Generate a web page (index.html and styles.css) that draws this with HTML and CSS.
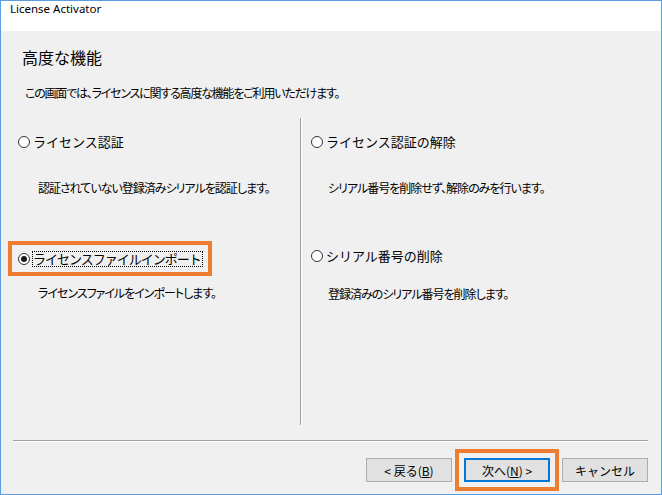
FILE: index.html
```html
<!DOCTYPE html>
<html>
	<head>
		<meta charset="UTF-8">
		<title>License Activator</title>
		<link rel="stylesheet" href="styles.css">
	</head>
	<body>
		<div class="window">
			<div class="titlebar">License Activator</div>
			<div class="client">
				<h1 class="head">高度な機能</h1>
				<p class="lead">この画面では、ライセンスに関する高度な機能をご利用いただけます。</p>

				<div class="options">
					<div class="col col_left">
						<div class="opt first"><span class="radio"></span><span class="label">ライセンス認証</span></div>
						<p class="desc first_desc">認証されていない登録済みシリアルを認証します。</p>
						<div class="mark">
							<div class="opt"><span class="radio checked"></span><span class="label focus">ライセンスファイルインポート</span></div>
						</div>
						<p class="desc last_desc">ライセンスファイルをインポートします。</p>
					</div>
					<div class="divider"></div>
					<div class="col col_right">
						<div class="opt first"><span class="radio"></span><span class="label">ライセンス認証の解除</span></div>
						<p class="desc first_desc">シリアル番号を削除せず、解除のみを行います。</p>
						<div class="opt second"><span class="radio"></span><span class="label">シリアル番号の削除</span></div>
						<p class="desc last_desc">登録済みのシリアル番号を削除します。</p>
					</div>
				</div>

				<div class="sep"></div>

				<div class="buttons">
					<button class="btn">&lt; 戻る(<u>B</u>)</button>
					<button class="btn btn_default">次へ(<u>N</u>) &gt;</button>
					<button class="btn">キャンセル</button>
				</div>
			</div>
		</div>
	</body>
</html>
```

FILE: styles.css
```css
body{margin: 0; background: #fff; font-family: "Noto Sans CJK JP", sans-serif; color: #000;}
p, h1{margin: 0;}

.window{width: 662px; height: 495px; box-sizing: border-box; border: 1px solid #5a9de0;
	background: #f0f0f0; display: flex; flex-direction: column;}
.titlebar{height: 30px; line-height: 30px; background: #fff; padding-left: 9px;
	font: 11.5px "Noto Sans", sans-serif;}
.client{flex: 1; display: flex; flex-direction: column;}

.head{margin: 16px 0 0 21px; font-size: 16px; font-weight: normal; line-height: 20px;}
.lead{margin: 18px 0 0 24px; font-size: 12px; line-height: 16px; font-feature-settings: "palt";
	letter-spacing: -1.2px;}

/* two columns of radio options */
.options{display: flex; margin-top: 17px; height: 307px;}
.col{box-sizing: border-box;}
.col_left{width: 299px; padding: 16px 0 0 17px;}
.col_right{flex: 1; padding: 16px 0 0 9px;}
.divider{width: 1px; background: #a0a0a0; border-right: 1px solid #fff;}

.opt{display: flex; align-items: center; height: 16px;}
.radio{width: 12px; height: 12px; box-sizing: border-box; border: 1px solid #333; border-radius: 50%;
	background: #fff; display: flex; align-items: center; justify-content: center; flex: none;}
.radio.checked::after{content: ""; width: 6px; height: 6px; border-radius: 50%; background: #1a1a1a;}
.label{margin-left: 2px; font-size: 13px; line-height: 14px; white-space: nowrap;
	border: 1px dotted transparent;}
.label.focus{border-color: #000; letter-spacing: -1px; padding-right: 1px;}

.desc{font-size: 12px; line-height: 16px; font-feature-settings: "palt"; letter-spacing: -1px;
	white-space: nowrap;}
.col_left .desc{margin-left: 20px;}
.col_right .desc{margin-left: 17px;}
.first_desc{margin-top: 30px;}
.col_left .last_desc{margin-top: 9px;}
.col_right .second{margin-top: 52px;}
.col_right .last_desc{margin-top: 22px;}

.mark{width: 204px; box-sizing: border-box; margin: 45px 0 0 -10px; padding: 6px 0 5px 6px;
	border: 4px solid #ed7d31;}

.sep{margin: 15px 13px 0 12px; height: 1px; background: #a0a0a0; border-bottom: 1px solid #fff;}

.buttons{display: flex; justify-content: flex-end; gap: 12px; margin-top: 16px; padding-right: 13px;}
.btn{width: 86px; height: 24px; box-sizing: border-box; border: 1px solid #adadad; background: #e1e1e1;
	font: 12px "Noto Sans CJK JP", sans-serif; color: #000; padding: 0;}
.btn u{text-underline-offset: 1px;}
.btn_default{border: 2px solid #0078d7; outline: 4px solid #ed7d31; outline-offset: 5px;}
```
